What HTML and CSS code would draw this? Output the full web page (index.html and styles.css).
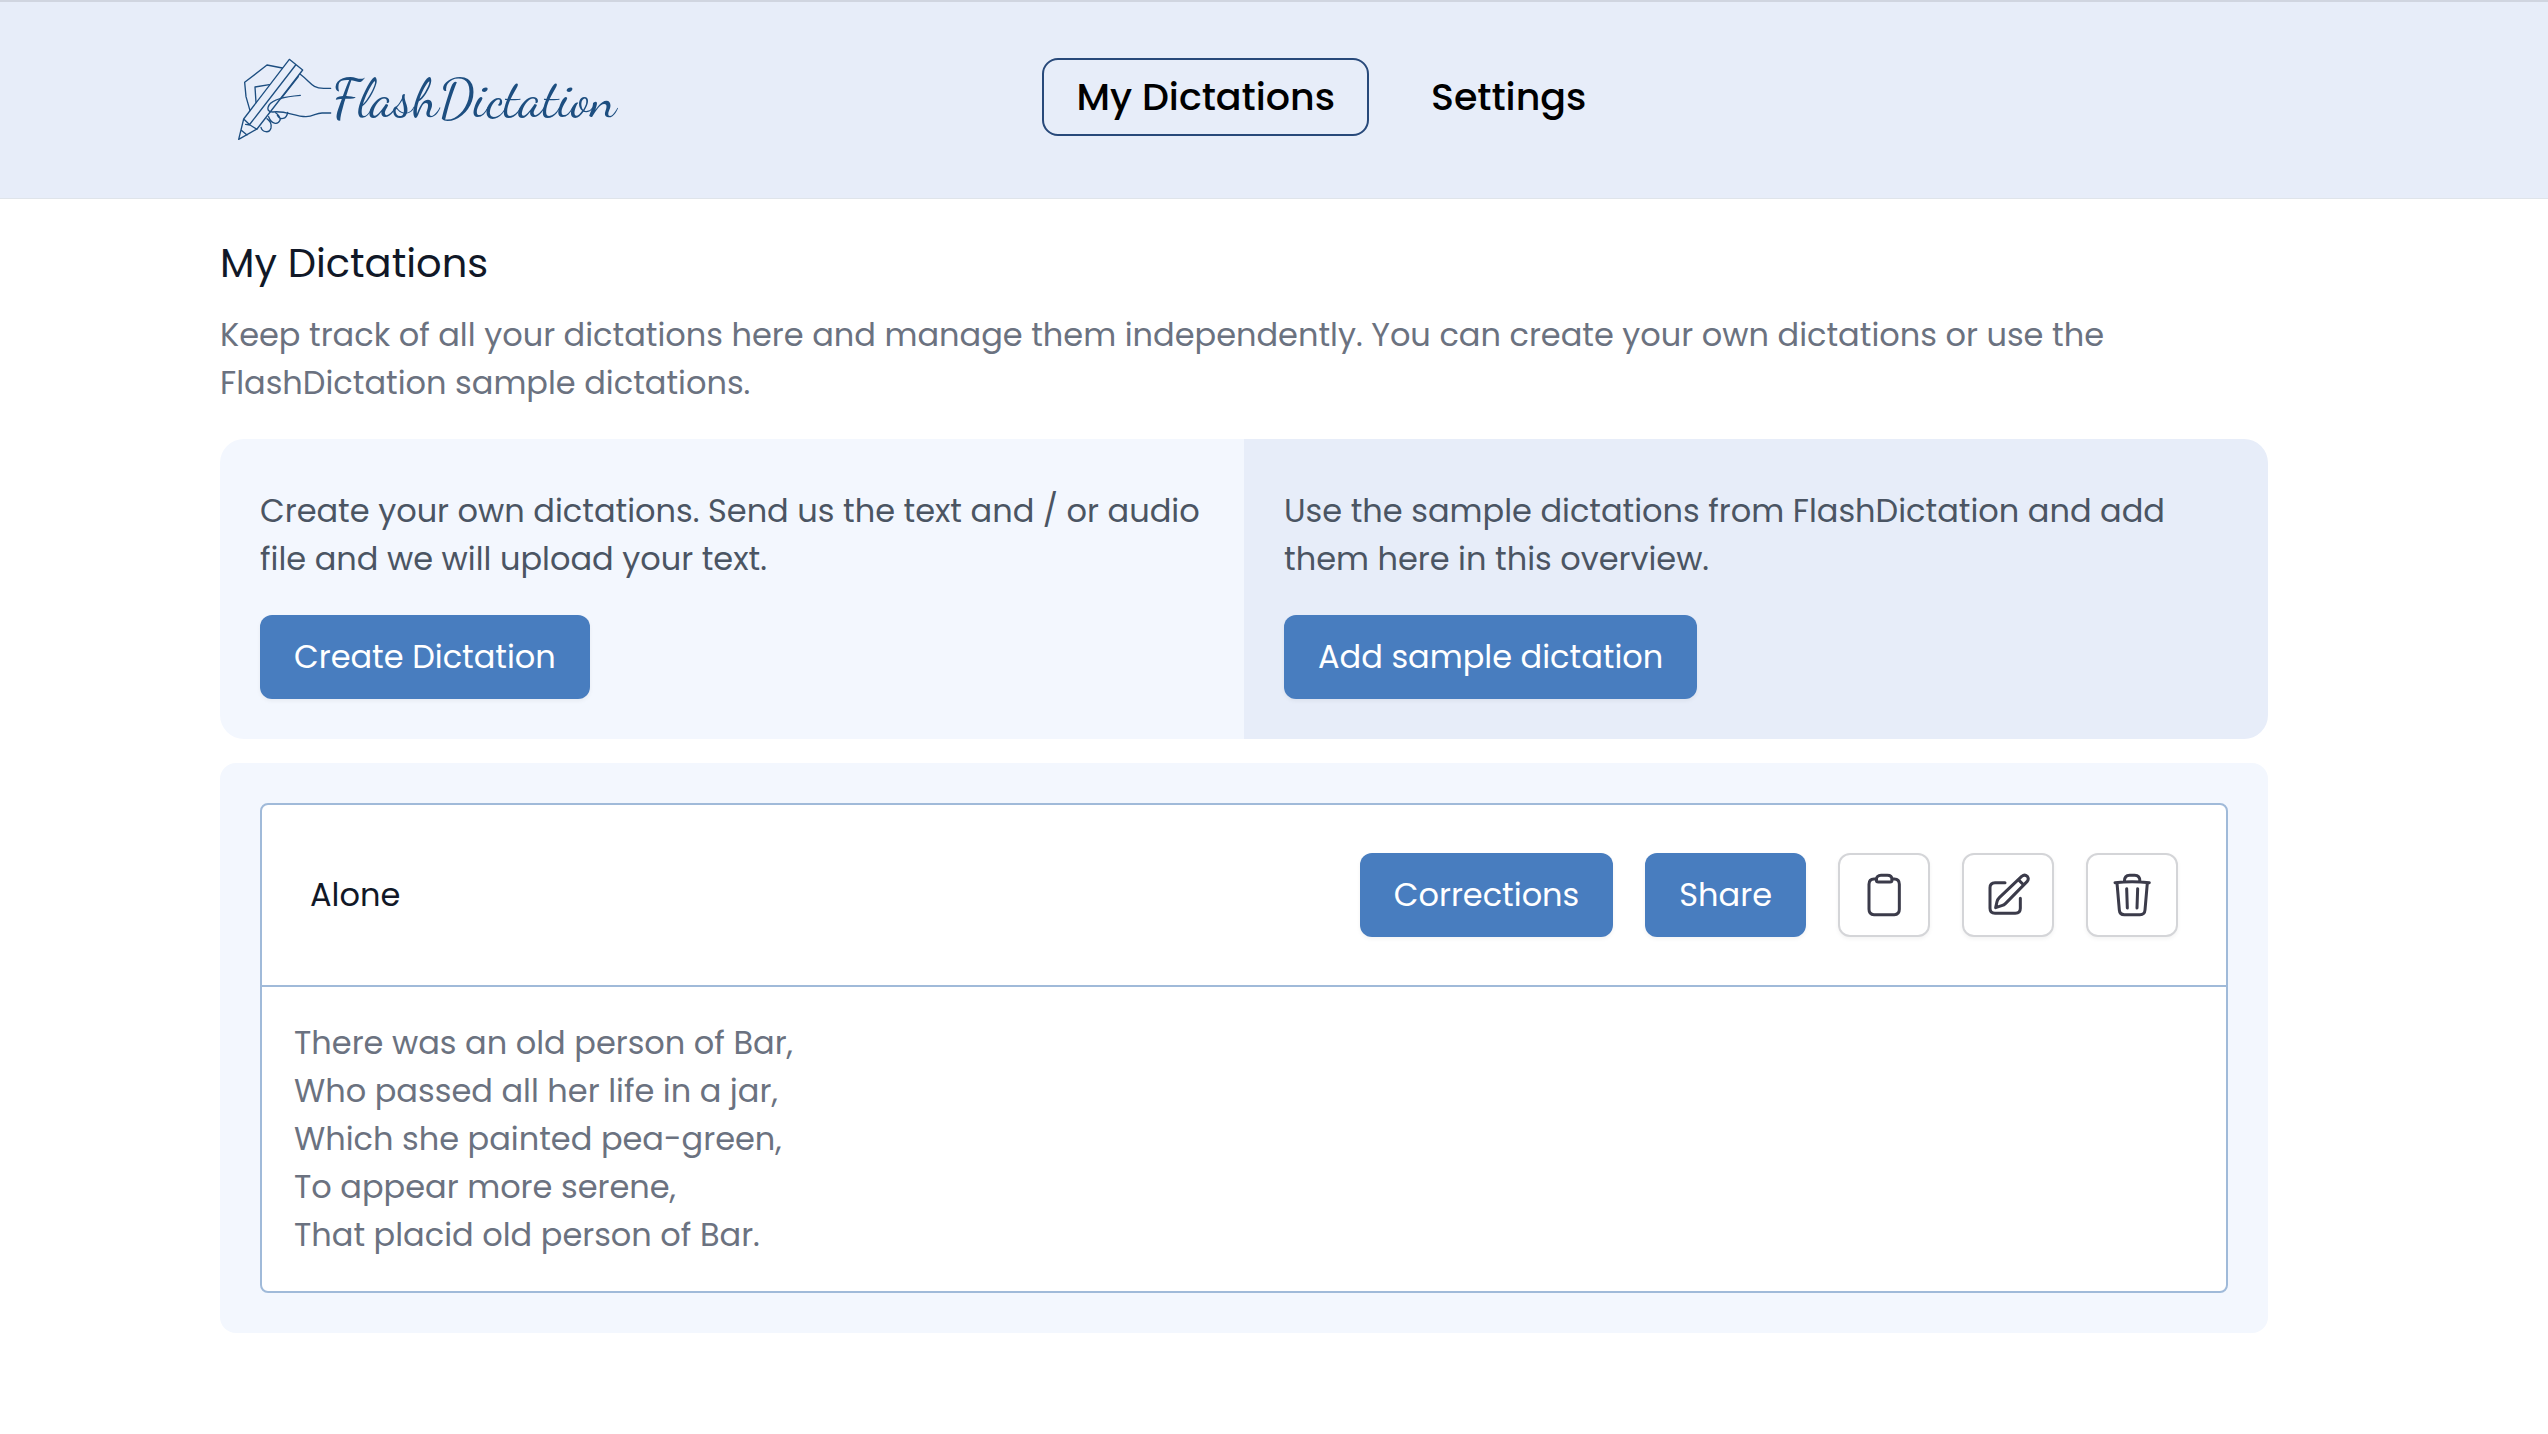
FILE: index.html
```html
<!DOCTYPE html>
<html lang="en">
<head>
  <meta charset="utf-8">
  <meta name="viewport" content="width=device-width, initial-scale=1">
  <title>My Dictations – FlashDictation</title>
  <link rel="stylesheet" href="styles.css">
</head>
<body>
  <header class="site-header">
    <div class="header-inner">
      <a class="logo" href="#">
        <svg class="logo-mark" viewBox="105 49 288 252" aria-hidden="true">
          <path d="M265 56 305 88 168 265 113 296 128 235ZM284 73 147 250M128 235 147 253 168 266M147 253 134 251M120 268 138 283"/>
          <path d="M244 82 198 73 131 125 135 168 147 210M205 132 162 139 165 186M297 100C330 125 332 143 368 143H389M292 108 240 174"/>
          <path d="M298 164C250 168 215 178 205 192 196 206 202 214 215 214 252 208 280 228 315 228 340 226 345 216 365 217H389"/>
          <path d="M180 260C184 275 205 279 210 262 213 248 206 242 198 234M203 228C211 250 230 254 237 239 240 228 232 222 224 216M229 224C236 239 257 237 260 215"/>
        </svg>
        <span class="logo-text">FlashDictation</span>
      </a>
      <nav class="main-nav">
        <a class="nav-link nav-link-active" href="#" aria-current="page">My Dictations</a>
        <a class="nav-link" href="#">Settings</a>
      </nav>
    </div>
  </header>

  <main class="page">
    <h1 class="page-title">My Dictations</h1>
    <p class="page-intro">Keep track of all your dictations here and manage them independently. You can create your own dictations or use the FlashDictation sample dictations.</p>

    <section class="options">
      <div class="option">
        <p class="option-text">Create your own dictations. Send us the text and / or audio file and we will upload your text.</p>
        <button class="button" type="button">Create Dictation</button>
      </div>
      <div class="option option-sample">
        <p class="option-text">Use the sample dictations from FlashDictation and add them here in this overview.</p>
        <button class="button" type="button">Add sample dictation</button>
      </div>
    </section>

    <section class="dictations">
      <article class="dictation">
        <div class="dictation-head">
          <h2 class="dictation-title">Alone</h2>
          <div class="actions">
            <button class="button" type="button">Corrections</button>
            <button class="button" type="button">Share</button>
            <button class="icon-button" type="button" aria-label="Copy">
              <svg class="icon" viewBox="0 0 132 132" aria-hidden="true"><path d="M44 18H36Q21 18 21 34V109Q21 125 36 125H97Q112 125 112 109V34Q112 18 97 18H89M57 7H76C86 7 90 13 90 20 90 25 88 27 84 27H49C45 27 43 25 43 20 43 13 48 7 57 7Z"/></svg>
            </button>
            <button class="icon-button" type="button" aria-label="Edit">
              <svg class="icon" viewBox="0 0 132 132" aria-hidden="true"><path d="M57 29H27Q12 29 12 44V106Q12 121 27 121H88Q103 121 103 106V76M29 104 33 86Q35 79 40 74L107 10Q116 3 124 10 130 18 123 26L59 91Q54 96 47 98ZM97 20 113 36"/></svg>
            </button>
            <button class="icon-button" type="button" aria-label="Delete">
              <svg class="icon" viewBox="0 0 132 132" aria-hidden="true"><path d="M15 29Q66 24 118 29M43 26C43 12 48 7 59 7H74C85 7 90 12 90 26M21 30 28 111Q29 125 43 125H90Q104 125 105 111L112 30M50 47 52 105M83 47 81 105"/></svg>
            </button>
          </div>
        </div>
        <p class="dictation-body">There was an old person of Bar,<br>Who passed all her life in a jar,<br>Which she painted pea-green,<br>To appear more serene,<br>That placid old person of Bar.</p>
      </article>
    </section>
  </main>
</body>
</html>
```
FILE: styles.css
```css
* {
  box-sizing: border-box;
}

body {
  margin: 0;
  padding-right: 60px;
  background: #fff;
  color: #111827;
  font-family: Poppins, Inter, sans-serif;
  font-size: 32px;
  line-height: 48px;
}

h1,
h2,
p {
  margin: 0;
  font-weight: 400;
}

a {
  color: inherit;
  text-decoration: none;
}

.site-header {
  margin-right: -60px;
  padding: 56px 60px 62px 0;
  background: #e7edf9;
  border-top: 2px solid #d0d5e0;
  border-bottom: 1px solid #dfe4ea;
}

.header-inner {
  display: grid;
  grid-template-rows: 78px;
  grid-template-columns: 40% auto;
  align-items: center;
  justify-content: start;
  max-width: 2048px;
  margin: 0 auto;
  padding: 0 16px;
}

.logo {
  display: flex;
  align-items: center;
  padding-top: 4px;
  color: #1d4e80;
}

.logo-mark {
  width: 96px;
  height: 84px;
  fill: none;
  stroke: currentColor;
  stroke-width: 4;
  stroke-linecap: round;
  stroke-linejoin: round;
}

.logo-text {
  font-family: "Dancing Script", "Liberation Serif", serif;
  font-size: 54px;
}

.main-nav {
  display: flex;
  gap: 28px;
}

.nav-link {
  padding: 13px 32px;
  border: 2px solid transparent;
  border-radius: 16px;
  color: #000;
  font-size: 38px;
  font-weight: 500;
}

.nav-link-active {
  border-color: #28497a;
}

.page {
  max-width: 2048px;
  margin: 0 auto;
  padding: 40px 0;
}

.page-title {
  margin-bottom: 24px;
  font-size: 40px;
}

.page-intro {
  margin-bottom: 32px;
  color: #6b7280;
}

.options {
  display: grid;
  grid-template-columns: 1fr 1fr;
  margin-bottom: 24px;
  overflow: hidden;
  border-radius: 24px;
}

.option {
  padding: 48px 40px 40px;
  background: #f3f7fe;
}

.option-sample {
  background: #e7edf9;
}

.option-text {
  margin-bottom: 32px;
  color: #4b5563;
}

.button,
.icon-button {
  display: inline-flex;
  align-items: center;
  justify-content: center;
  height: 84px;
  border-radius: 12px;
  font: inherit;
  box-shadow: 0 2px 4px rgba(0, 0, 0, 0.05);
}

.button {
  padding: 0 34px;
  border: 0;
  background: #487dbf;
  color: #fff;
}

.icon-button {
  width: 92px;
  padding: 0;
  border: 2px solid #d4d5d8;
  background: #fff;
  color: #3b3b4a;
}

.icon {
  width: 44px;
  height: 44px;
  fill: none;
  stroke: currentColor;
  stroke-width: 9;
  stroke-linecap: round;
  stroke-linejoin: round;
}

.dictations {
  padding: 40px;
  border-radius: 16px;
  background: #f3f7fe;
}

.dictation {
  border: 2px solid #a0bad9;
  border-radius: 8px;
  background: #fff;
}

.dictation-head {
  display: flex;
  align-items: center;
  justify-content: space-between;
  padding: 48px;
  border-bottom: 2px solid #a0bad9;
}

.dictation-title {
  font-size: 32px;
}

.actions {
  display: flex;
  gap: 32px;
}

.dictation-body {
  padding: 32px;
  color: #6b7280;
}
```
